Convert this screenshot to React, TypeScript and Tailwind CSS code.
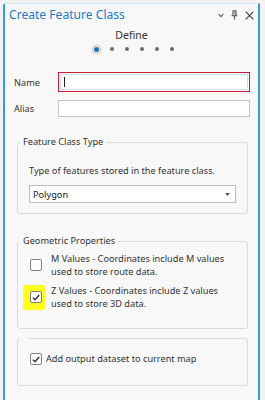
import React from "react";

function Check() {
  return (
    <svg width="8" height="7" viewBox="0 0 8 7" fill="none">
      <path d="M0.8 3.6 L3 5.8 L7.2 1" stroke="#2b2b2b" strokeWidth="1.3" />
    </svg>
  );
}

function CheckBox({ checked }: { checked?: boolean }) {
  return (
    <span className="flex h-[12px] w-[12px] shrink-0 items-center justify-center rounded-[2px] border border-[#808080] bg-white">
      {checked && <Check />}
    </span>
  );
}

function GroupBox({
  title,
  className,
  children,
}: {
  title?: string;
  className?: string;
  children: React.ReactNode;
}) {
  return (
    <fieldset
      className={`rounded-[3px] border border-[#d9d9d9] px-[11px] ${className ?? ""}`}
    >
      <legend className="ml-[-9px] px-[3px] text-[9.2px] leading-[14px] text-[#333]">
        {title ?? "\u00a0"}
      </legend>
      {children}
    </fieldset>
  );
}

export default function App() {
  const steps = [0, 1, 2, 3, 4, 5];

  return (
    <div
      className="h-[400px] w-[265px] overflow-hidden bg-[#f2f2f2] pl-[3px] pt-[3px] text-[#333]"
      style={{ fontFamily: '"Noto Sans", "Open Sans", sans-serif' }}
    >
      <div className="h-[400px] w-[257px] rounded-tl-[3px] border-x-2 border-t border-x-[#3a99da] border-t-[#d3e5f3] bg-[#f8f8f8]">
        {/* header */}
        <div className="flex items-center justify-between pl-[4px] pr-[4px] pt-[3px]">
          <span className="text-[12.1px] leading-[16px] text-[#1b7ac6]">
            Create Feature Class
          </span>
          <div className="flex items-center gap-[7px]">
            <svg width="6" height="5" viewBox="0 0 6 5" fill="none">
              <path d="M0.6 1 L3 3.6 L5.4 1" stroke="#555" strokeWidth="1.1" />
            </svg>
            <svg width="7" height="10" viewBox="0 0 7 10" fill="none">
              <path d="M1.5 0.8 H5.5 M2 0.8 V5.5 M5 0.8 V5.5 M0.5 5.8 H6.5 M3.5 5.8 V9.6" stroke="#555" strokeWidth="1.1" />
              <path d="M4 1 V5.5" stroke="#555" strokeWidth="0.8" />
            </svg>
            <svg width="9" height="9" viewBox="0 0 9 9" fill="none">
              <path d="M0.7 0.7 L8.3 8.3 M8.3 0.7 L0.7 8.3" stroke="#444" strokeWidth="1.2" />
            </svg>
          </div>
        </div>

        {/* step */}
        <div className="mt-[5px] flex flex-col items-center">
          <span className="text-[10.5px] leading-[14px] text-[#333]">Define</span>
          <div className="ml-[5px] mt-[3px] flex h-[8px] items-center">
            {steps.map((s) => (
              <span key={s} className="flex w-[15px] items-center justify-center">
                {s === 0 ? (
                  <span className="flex h-[9px] w-[9px] items-center justify-center rounded-full border border-[#f2a596]">
                    <span className="h-[5px] w-[5px] rounded-full bg-[#1474c4]" />
                  </span>
                ) : (
                  <span className="h-[4px] w-[4px] rounded-full bg-[#6b6b6b]" />
                )}
              </span>
            ))}
          </div>
        </div>

        {/* name / alias */}
        <div className="mt-[19px] flex flex-col gap-[8px] pl-[9px] pr-[8px]">
          <div className="flex items-center">
            <label className="w-[44px] text-[9.2px] leading-[13px]">Name</label>
            <div className="flex h-[20px] flex-1 border border-[#cf1b31] p-px">
              <div className="flex h-full w-full items-center border border-[#c6e3f6] bg-white pl-[3px]">
                <span className="h-[10px] w-px bg-[#222]" />
              </div>
            </div>
          </div>
          <div className="flex items-center">
            <label className="w-[44px] text-[9.2px] leading-[13px]">Alias</label>
            <div className="h-[17px] flex-1 border border-[#c4c4c4] bg-white" />
          </div>
        </div>

        <div className="flex flex-col pl-[12px] pr-[10px]">
          <GroupBox title="Feature Class Type" className="mt-[18px] pb-[10px]">
            <p className="mt-[15px] text-[9.2px] leading-[13px]">
              Type of features stored in the feature class.
            </p>
            <div className="mt-[8px] flex h-[18px] items-center justify-between border border-[#bdbdbd] bg-white pl-[3px] pr-[5px]">
              <span className="text-[9.2px] leading-[13px] text-[#222]">Polygon</span>
              <svg width="5" height="3" viewBox="0 0 5 3">
                <path d="M0 0 H5 L2.5 3 Z" fill="#555" />
              </svg>
            </div>
          </GroupBox>

          <GroupBox title="Geometric Properties" className="mt-[20px] pb-[18px]">
            <div className="mt-[4px] flex items-center gap-[9px] pl-px">
              <CheckBox />
              <span className="text-[9.2px] leading-[13px]">
                M Values - Coordinates include M values
                <br />
                used to store route data.
              </span>
            </div>
            <div className="mt-[6px] flex items-center gap-[6px]">
              <span className="ml-[-6px] flex h-[25px] w-[22px] shrink-0 items-center rounded-[2px] bg-[#ffff1f] pl-[7px]">
                <CheckBox checked />
              </span>
              <span className="text-[9.2px] leading-[13px]">
                Z Values - Coordinates include Z values
                <br />
                used to store 3D data.
              </span>
            </div>
          </GroupBox>

          <GroupBox className="mt-[2px] pb-[19px]">
            <div className="mt-[7px] flex items-center gap-[4px] pl-px">
              <CheckBox checked />
              <span className="text-[9.2px] leading-[14px]">
                Add output dataset to current map
              </span>
            </div>
          </GroupBox>
        </div>
      </div>
    </div>
  );
}
